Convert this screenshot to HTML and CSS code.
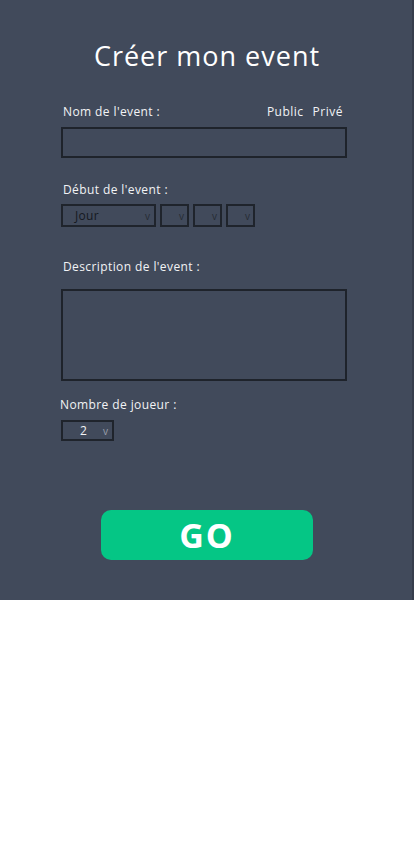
FILE: index.html
```html
<!DOCTYPE html>
<html lang="fr">
<head>
<meta charset="utf-8">
<link rel="stylesheet" href="styles.css">
<title>Créer mon event</title>
</head>
<body>
<main class="page">
  <h1 class="title">Créer mon event</h1>
  <form class="form">
    <div class="row-head">
      <span class="label">Nom de l'event :</span>
      <span class="privacy"><span>Public</span><span>Privé</span></span>
    </div>
    <div class="input"></div>

    <span class="label label-debut">Début de l'event :</span>
    <div class="selects">
      <div class="sel sel-jour"><span class="sel-text">Jour</span><span class="arrow">v</span></div>
      <div class="sel sel-small"><span class="arrow">v</span></div>
      <div class="sel sel-small"><span class="arrow">v</span></div>
      <div class="sel sel-small"><span class="arrow">v</span></div>
    </div>

    <span class="label label-desc">Description de l'event :</span>
    <div class="textarea"></div>

    <span class="label label-nb">Nombre de joueur :</span>
    <div class="sel sel-nb"><span class="sel-num">2</span><span class="arrow">v</span></div>
  </form>
  <div class="go-wrap"><button class="go" type="button">GO</button></div>
</main>
</body>
</html>
```
FILE: styles.css
```css
* { box-sizing: border-box; }
html, body { margin: 0; padding: 0; background: #ffffff; }
body { font-family: "Open Sans", "Noto Sans", sans-serif; }

.page {
  width: 414px;
  height: 600px;
  background: #414a5b;
  border-right: 2px solid #363d4c;
  padding-top: 39px;
}

.title {
  margin: 0;
  text-align: center;
  color: #ffffff;
  font-weight: 400;
  font-size: 27px;
  line-height: 34px;
  letter-spacing: 1px;
  padding-left: 2px;
}

.form {
  margin-left: 61px;
  width: 286px;
  display: flex;
  flex-direction: column;
  align-items: flex-start;
}

.label {
  color: #f2f3f5;
  font-size: 12px;
  line-height: 16px;
  letter-spacing: 0.4px;
  padding-left: 2px;
}

.row-head {
  width: 100%;
  display: flex;
  justify-content: space-between;
  margin-top: 31px;
}
.privacy {
  display: flex;
  gap: 9px;
  color: #f2f3f5;
  font-size: 12px;
  line-height: 16px;
  letter-spacing: 0.5px;
  padding-right: 4px;
}

.input {
  margin-top: 7px;
  width: 286px;
  height: 31px;
  border: 2px solid #1e232b;
}

.label-debut { margin-top: 24px; }

.selects {
  margin-top: 6px;
  display: flex;
  gap: 4px;
}

.sel {
  height: 23px;
  border: 2px solid #1f242c;
  display: flex;
  align-items: center;
  justify-content: space-between;
  color: #1a1e26;
  font-size: 12px;
}
.sel-jour { width: 95px; padding: 0 4px 0 12px; }
.sel-small { width: 29px; justify-content: flex-end; padding-right: 3px; }
.sel-text { font-size: 12px; color: #15191f; letter-spacing: 0.3px; }
.arrow { font-size: 10px; color: #262b34; line-height: 1; }

.label-desc { margin-top: 32px; }

.textarea {
  margin-top: 14px;
  width: 286px;
  height: 92px;
  border: 2px solid #1e232b;
}

.label-nb { margin-top: 16px; padding-left: 0; margin-left: -1px; }

.sel-nb {
  margin-top: 7px;
  width: 53px;
  height: 21px;
  padding: 0 4px 0 17px;
}
.sel-num { color: #f2f3f5; font-size: 12px; }
.sel-nb .arrow { color: #9aa0ab; }

.go-wrap {
  display: flex;
  justify-content: center;
  margin-top: 69px;
}
.go {
  width: 212px;
  height: 50px;
  border: none;
  border-radius: 10px;
  background: #05c685;
  color: #ffffff;
  font-family: "Open Sans", "Noto Sans", sans-serif;
  font-weight: 700;
  font-size: 34px;
  letter-spacing: 2px;
  padding: 0;
  margin-left: 2px;
}
```
